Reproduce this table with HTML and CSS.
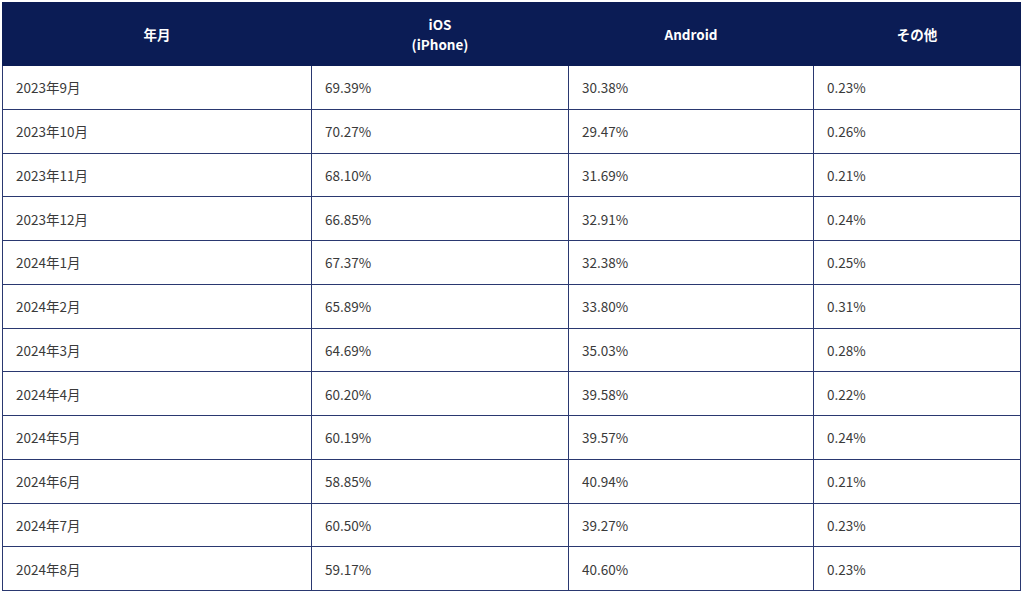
FILE: index.html
```html
<!DOCTYPE html>
<html lang="ja">
<head>
<meta charset="utf-8">
<link rel="stylesheet" href="styles.css">
</head>
<body>
<table class="share">
  <colgroup>
    <col class="c1"><col class="c2"><col class="c3"><col class="c4">
  </colgroup>
  <thead>
    <tr><th>年月</th><th>iOS<br>(iPhone)</th><th>Android</th><th>その他</th></tr>
  </thead>
  <tbody>
    <tr><td>2023年9月</td><td>69.39%</td><td>30.38%</td><td>0.23%</td></tr>
    <tr><td>2023年10月</td><td>70.27%</td><td>29.47%</td><td>0.26%</td></tr>
    <tr><td>2023年11月</td><td>68.10%</td><td>31.69%</td><td>0.21%</td></tr>
    <tr><td>2023年12月</td><td>66.85%</td><td>32.91%</td><td>0.24%</td></tr>
    <tr><td>2024年1月</td><td>67.37%</td><td>32.38%</td><td>0.25%</td></tr>
    <tr><td>2024年2月</td><td>65.89%</td><td>33.80%</td><td>0.31%</td></tr>
    <tr><td>2024年3月</td><td>64.69%</td><td>35.03%</td><td>0.28%</td></tr>
    <tr><td>2024年4月</td><td>60.20%</td><td>39.58%</td><td>0.22%</td></tr>
    <tr><td>2024年5月</td><td>60.19%</td><td>39.57%</td><td>0.24%</td></tr>
    <tr><td>2024年6月</td><td>58.85%</td><td>40.94%</td><td>0.21%</td></tr>
    <tr><td>2024年7月</td><td>60.50%</td><td>39.27%</td><td>0.23%</td></tr>
    <tr><td>2024年8月</td><td>59.17%</td><td>40.60%</td><td>0.23%</td></tr>
  </tbody>
</table>
</body>
</html>
```
FILE: styles.css
```css
html, body {
  margin: 0;
  padding: 0;
  background: #ffffff;
}
body {
  padding: 2px 4px 0 2px;
  font-family: "Noto Sans CJK JP", "Noto Sans", sans-serif;
  color: #3a3a3a;
}
.share {
  width: 1018px;
  border-collapse: collapse;
  table-layout: fixed;
  font-size: 13.5px;
}
.c1 { width: 309px; }
.c2 { width: 257px; }
.c3 { width: 245px; }
.c4 { width: 207px; }
.share th {
  background: #0b1c55;
  color: #ffffff;
  font-weight: 700;
  text-align: center;
  height: 62px;
  padding: 0 12px;
  line-height: 20px;
  border: 1px solid #0b1c55;
}
.share td {
  height: 42.75px;
  padding: 0 12px 0 13px;
  border: 1px solid #2a3870;
  line-height: 20px;
  vertical-align: middle;
}
```
